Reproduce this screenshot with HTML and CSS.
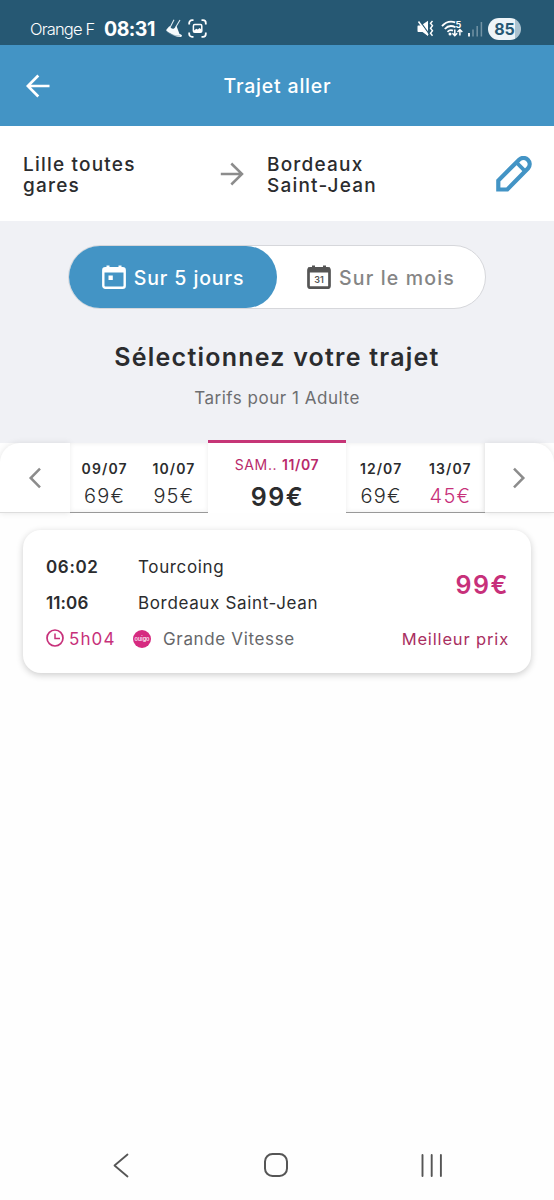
FILE: index.html
```
<!DOCTYPE html>
<html lang="fr">
<head>
<meta charset="utf-8">
<title>Trajet aller</title>
<link rel="stylesheet" href="styles.css">
</head>
<body>
<div class="screen">
  <div class="status">
    <span class="carrier">Orange F</span>
    <span class="clock">08:31</span>
    <svg class="shoe" width="17" height="19" viewBox="0 0 17 19"><path d="M8 .8 3.800 9M14 1 9.500 8.500" stroke="#dcebf2" stroke-width="1.100" fill="none"/><path d="M3.500 7 .5 10.500c-.5 1 0 1.500 1 2.200L9 17c3 1.500 7 1.500 7-.2 0-1-1-1.400-2.500-1.800L10.500 7 8 9.500c-1.500.8-3.500-.3-4.500-2.500Z" fill="#f5fafc"/><path d="M1 12.500c3 2.800 7 4.500 13 4.500" stroke="#6d92a5" stroke-width=".6" fill="none"/></svg>
    <svg class="capture" width="19" height="19" viewBox="0 0 19 19"><path d="M1.200 5.500V4a2.800 2.800 0 0 1 2.800-2.800h1.500M13.500 1.200H15A2.800 2.800 0 0 1 17.800 4v1.500M17.800 13.500V15a2.800 2.800 0 0 1-2.800 2.800h-1.500M5.500 17.800H4A2.800 2.800 0 0 1 1.200 15v-1.500" fill="none" stroke="#fff" stroke-width="1.800"/><rect x="5.400" y="5.600" width="8.400" height="7.600" rx="1.300" fill="none" stroke="#fff" stroke-width="1.500"/><path d="m6 11.500 2.300-1.800 1.500.9 1.800-1.600 1.800 1.500v2.500H6Z" fill="#fff"/></svg>
    <span class="grow"></span>
    <svg class="mute" width="17" height="17" viewBox="0 0 17 17"><path d="M1.200 5.500H4l1 .5 6 9V16L5.500 12H1.200Q.5 12 .5 11V6.500q0-1 .7-1ZM4 5.500l7-4.800V14Z" fill="#fff"/><path d="m2.700.8 9 12.500" stroke="#265873" stroke-width="1.200"/><path d="m1.500 1.500 9.500 13.500" stroke="#fff" stroke-width="1.500"/><path d="M15.500 1 13.500 3.300l2 2.500-2 2.500 2 2.500-2 2.500 2 2.500" fill="none" stroke="#fff" stroke-width="1.400"/></svg>
    <svg class="wifi" width="23" height="17" viewBox="0 0 23 17"><path d="M1 6.200C4.500 2 9.500.8 14.200 2.300M3.800 9c2.700-3 6.800-3.800 10.700-1.700M6.500 11.800c1.500-1.500 3.500-2 5.500-1.200" fill="none" stroke="#fff" stroke-width="1.800"/><circle cx="9" cy="14" r="1.500" fill="#fff"/><path d="M13.800 9.500v6M11.400 13.200l2.400 2.500 2.400-2.500M18.900 15.500v-6M16.500 12l2.400-2.500 2.400 2.500" fill="none" stroke="#fff" stroke-width="1.500"/><text x="14.500" y="7.500" class="band">5</text></svg>
    <svg class="signal" width="15" height="16" viewBox="0 0 15 16"><path d="M1 12v3.500" stroke="#fff" stroke-width="1.800"/><path d="M5 8.500v7M9.200 5v10.500M13.400 1v14.500" stroke="#7293a5" stroke-width="1.500"/></svg>
    <span class="battery">85</span>
  </div>

  <header class="appbar">
    <svg width="24" height="24" viewBox="0 0 24 24"><path d="M23.500 12H2M12.300 1.500 1.800 12l10.500 10.500" fill="none" stroke="#fff" stroke-width="2.700"/></svg>
    <h1 class="appbar-title">Trajet aller</h1>
  </header>

  <section class="route">
    <p class="origin">Lille toutes<br>gares</p>
    <svg class="route-arrow" width="24" height="24" viewBox="0 0 24 24"><path d="M.8 12h20.500M11.300 1.500 22 12 11.300 22.500" fill="none" stroke="#8c8c8c" stroke-width="2.500"/></svg>
    <p class="destination">Bordeaux<br>Saint-Jean</p>
    <svg class="edit" width="36" height="36" viewBox="0 0 36 36"><path d="M2.300 33.500v-9L23.300 3.500c6-5 13.700 2.800 8.800 8.800L11.300 33.500Z" fill="none" stroke="#4394c5" stroke-width="4.200"/><path d="m20.500 6.500 8.800 8.800" stroke="#4394c5" stroke-width="3.800"/></svg>
  </section>

  <section class="intro">
    <div class="switch">
      <button class="option option-on">
        <svg width="24" height="24" viewBox="0 0 24 24"><rect x="1.300" y="3.300" width="21.400" height="19.400" rx="2" fill="none" stroke="#fff" stroke-width="2.400"/><path d="M1 3.500h22v4H1ZM4.500.5h3v4h-3Zm12 0h3v4h-3ZM6.500 10.500h4.300V15H6.500Z" fill="#fff"/></svg>
        <span class="option-five">Sur 5 jours</span>
      </button>
      <button class="option">
        <svg width="24" height="24" viewBox="0 0 24 24"><rect x="1.500" y="3.300" width="21" height="19.400" rx="2" fill="none" stroke="#555" stroke-width="2.700"/><path d="M1 2.500h22v5H1ZM5 .5h3v3H5Zm11 0h3v3h-3Z" fill="#555"/><text x="12" y="18" class="day">31</text></svg>
        <span class="option-month">Sur le mois</span>
      </button>
    </div>
    <h2 class="title">Sélectionnez votre trajet</h2>
    <p class="fares">Tarifs pour 1 Adulte</p>
  </section>

  <nav class="dates">
    <button class="pager pager-prev"><svg width="14" height="22" viewBox="0 0 14 22"><path d="M12 1.700 2.700 11 12 20.300" fill="none" stroke="#8c8c8c" stroke-width="2.500"/></svg></button>
    <div class="date-pair">
      <div class="date"><b class="day-label">09/07</b><span class="amount">69€</span></div>
      <div class="date"><b class="day-label">10/07</b><span class="amount">95€</span></div>
    </div>
    <div class="date date-on"><span class="day-current">SAM.. <b>11/07</b></span><b class="amount-current">99€</b></div>
    <div class="date-pair">
      <div class="date"><b class="day-label">12/07</b><span class="amount">69€</span></div>
      <div class="date"><b class="day-label">13/07</b><span class="amount best">45€</span></div>
    </div>
    <button class="pager pager-next"><svg width="14" height="22" viewBox="0 0 14 22"><path d="m2 1.700 9.300 9.300L2 20.300" fill="none" stroke="#8c8c8c" stroke-width="2.500"/></svg></button>
  </nav>

  <article class="card">
    <div class="trip">
      <div class="stop"><b class="time">06:02</b><span class="town">Tourcoing</span></div>
      <div class="stop"><b class="time time-end">11:06</b><span class="station">Bordeaux Saint-Jean</span></div>
      <div class="stop details">
        <svg width="18" height="18" viewBox="0 0 18 18"><circle cx="9" cy="9" r="8" fill="none" stroke="#c7307a" stroke-width="1.700"/><path d="M9 4.500v5h5" fill="none" stroke="#c7307a" stroke-width="1.500"/></svg>
        <span class="duration">5h04</span>
        <span class="brand"><svg width="18" height="18" viewBox="0 0 18 18"><circle cx="9" cy="9" r="9" fill="#d62a80"/><text x="9" y="10.600" class="logo" textLength="15" lengthAdjust="spacingAndGlyphs">ouigo</text></svg></span>
        <span class="service">Grande Vitesse</span>
      </div>
    </div>
    <div class="price"><b class="price-value">99€</b><span class="price-note">Meilleur prix</span></div>
  </article>

  <footer class="navbar">
    <svg width="16" height="25" viewBox="0 0 16 25"><path d="M14.500 1.500 1.500 12.500l13 11" fill="none" stroke="#555" stroke-width="1.800" stroke-linecap="round" stroke-linejoin="round"/></svg>
    <svg class="home" width="24" height="24" viewBox="0 0 24 24"><rect x="1" y="1" width="22" height="22" rx="7.500" fill="none" stroke="#555" stroke-width="2"/></svg>
    <svg width="22" height="23" viewBox="0 0 22 23"><path d="M1.500 1v21M10.700 1v21M19.900 1v21" stroke="#555" stroke-width="1.900" stroke-linecap="round"/></svg>
  </footer>
</div>
</body>
</html>
```
FILE: styles.css
```
* { box-sizing: border-box; }
body { margin: 0; background: #fefefe; font-family: Inter, "Open Sans", sans-serif; color: #2b2c2e; }
p, h1, h2 { margin: 0; font-weight: 500; }
button { border: 0; padding: 0; background: none; font: inherit; }
svg { display: block; flex: none; }
b { font-weight: 600; }
span, b { white-space: nowrap; }
.screen { width: 554px; height: 1200px; display: flex; flex-direction: column; overflow: hidden; }

.status { height: 45px; padding: 12px 33px 0 30px; background: #265873; color: #fff; display: flex; align-items: center; flex: none; }
.carrier { width: 74px; font-size: 16.5px; font-weight: 300; letter-spacing: -0.85px; }
.clock { width: 62px; font-size: 19.500px; font-weight: 700; letter-spacing: -0.500px; }
.capture { margin-left: 5px; }
.grow { flex: 1; }
.wifi { margin-left: 7px; }
.band { font-size: 9px; font-weight: 700; fill: #fff; }
.signal { margin-left: 4px; }
.battery { width: 33px; height: 22px; margin-left: 5px; border-radius: 11px; background: linear-gradient(90deg, #edf4f8 0 27px, #acc3d0 27px); color: #265873; font-size: 16px; font-weight: 700; line-height: 22px; text-align: center; }

.appbar { height: 81px; padding: 0 26px; background: #4394c5; display: flex; align-items: center; flex: none; }
.appbar-title { flex: 1; margin-right: 23px; text-align: center; color: #fff; font-size: 19.500px; line-height: 24px; letter-spacing: 0.800px; }

.route { height: 95px; padding: 0 22px 0 23px; background: #fff; display: flex; align-items: center; flex: none; font-size: 19px; line-height: 21px; letter-spacing: 1.200px; }
.origin { width: 197px; padding-top: 3px; }
.destination { flex: 1; margin-left: 23px; padding-top: 3px; }

.intro { height: 222px; padding-top: 24px; background: #f0f1f5; display: flex; flex-direction: column; align-items: center; flex: none; }
.switch { width: 418px; height: 64px; border: 1px solid #d6d7db; border-radius: 32px; background: #fff; display: flex; }
.option { flex: 1; display: flex; align-items: center; justify-content: center; gap: 8px; color: #858585; font-size: 19.500px; font-weight: 500; }
.option-on { background: #4394c5; border-radius: 31px; color: #fff; }
.option span { padding-top: 2px; }
.option-five { letter-spacing: 0.900px; }
.option-month { letter-spacing: 1.150px; }
.day { font-size: 9px; font-weight: 600; fill: #555; text-anchor: middle; }
.title { margin-top: 32px; font-size: 25px; line-height: 32px; font-weight: 600; letter-spacing: 1.230px; }
.fares { margin-top: 14px; font-size: 17px; line-height: 22px; font-weight: 400; letter-spacing: 0.530px; color: #6d6e70; }

.dates { height: 73px; margin-top: -3px; display: flex; align-items: flex-end; flex: none; }
.pager { width: 69.500px; height: 70px; background: #fff; border-bottom: 1px solid #ddd; display: flex; align-items: center; justify-content: center; box-shadow: 0 0 6px rgba(0,0,0,.1); }
.pager-prev { border-radius: 20px 0 0 0; }
.pager-next { border-radius: 0 20px 0 0; }
.date-pair { width: 138.500px; height: 70px; background: #fff; border-bottom: 1.500px solid #999; display: flex; box-shadow: inset 0 0 5px rgba(0,0,0,.08); }
.date { flex: 1; display: flex; flex-direction: column; align-items: center; padding-top: 17px; }
.day-label { font-size: 14px; line-height: 18px; letter-spacing: 1.100px; margin-right: -1px; }
.amount { margin-top: 5px; margin-right: -1px; font-size: 20px; line-height: 26px; font-weight: 350; letter-spacing: 1.200px; }
.best { color: #c7307a; }
.date-on { height: 73px; padding-top: 13px; background: #fff; border-top: 3px solid #c63577; }
.day-current { color: #b92a6b; font-size: 14px; line-height: 18px; letter-spacing: 0.650px; }
.amount-current { margin: 7px -1px 0 0; font-size: 25px; line-height: 32px; letter-spacing: 1.500px; }

.card { width: 508px; height: 143px; margin: 17px 23px 0; padding: 24px 23px 0; border-radius: 18px; background: #fff; box-shadow: 0 2px 7px rgba(0,0,0,.2); display: flex; justify-content: space-between; flex: none; }
.stop { height: 24px; margin-bottom: 12px; display: flex; align-items: center; font-size: 17px; font-weight: 370; letter-spacing: 0.650px; }
.stop span { padding-top: 1px; }
.time { width: 92px; padding-top: 1px; }
.time-end { letter-spacing: 0.100px; }
.duration { width: 64px; margin-left: 5px; color: #c7307a; letter-spacing: 1.100px; }
.service { margin-left: 12px; color: #66676a; }
.logo { font-size: 5.500px; font-weight: 500; letter-spacing: 0; fill: #fff; text-anchor: middle; }
.price { display: flex; flex-direction: column; align-items: flex-end; color: #c7307a; }
.price-value { margin: 15px -1px 0 0; font-size: 25px; line-height: 32px; letter-spacing: 1.500px; }
.price-note { margin: 26px -1px 0 0; font-size: 16.500px; line-height: 24px; font-weight: 370; letter-spacing: 0.850px; color: #a92f61; }

.navbar { height: 70px; margin-top: auto; padding: 0 111px 0 113px; display: flex; align-items: center; justify-content: space-between; flex: none; }
.home { margin-left: 2px; }
```
